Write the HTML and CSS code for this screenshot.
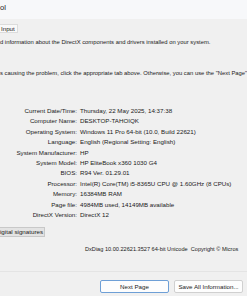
FILE: index.html
```html
<!DOCTYPE html>
<html lang="en">

<head>
  <meta charset="UTF-8">
  <title>DirectX Diagnostic Tool</title>
  <link rel="stylesheet" href="styles.css">
</head>

<body>
  <div class="titlebar">ol</div>

  <div class="window">
    <div class="tabs">
      <span class="tab">Input</span>
    </div>

    <p class="intro">d information about the DirectX components and drivers installed on your system.</p>
    <p class="intro second">s causing the problem, click the appropriate tab above. Otherwise, you can use the "Next Page"</p>

    <div class="sysinfo">
      <div class="row"><span class="label">Current Date/Time:</span><span class="value">Thursday, 22 May 2025, 14:37:38</span></div>
      <div class="row"><span class="label">Computer Name:</span><span class="value">DESKTOP-TAHOIQK</span></div>
      <div class="row"><span class="label">Operating System:</span><span class="value">Windows 11 Pro 64-bit (10.0, Build 22621)</span></div>
      <div class="row"><span class="label">Language:</span><span class="value">English (Regional Setting: English)</span></div>
      <div class="row"><span class="label">System Manufacturer:</span><span class="value">HP</span></div>
      <div class="row"><span class="label">System Model:</span><span class="value">HP EliteBook x360 1030 G4</span></div>
      <div class="row"><span class="label">BIOS:</span><span class="value">R94 Ver. 01.29.01</span></div>
      <div class="row"><span class="label">Processor:</span><span class="value">Intel(R) Core(TM) i5-8365U CPU @ 1.60GHz (8 CPUs)</span></div>
      <div class="row"><span class="label">Memory:</span><span class="value">16384MB RAM</span></div>
      <div class="row"><span class="label">Page file:</span><span class="value">4984MB used, 14149MB available</span></div>
      <div class="row"><span class="label">DirectX Version:</span><span class="value">DirectX 12</span></div>
    </div>

    <div class="check">
      <span class="check-label">igital signatures</span>
    </div>

    <div class="version">DxDiag 10.00.22621.3527 64-bit Unicode&nbsp; Copyright © Micros</div>

    <div class="buttons">
      <button class="btn default">Next Page</button>
      <button class="btn">Save All Information...</button>
    </div>
  </div>
</body>

</html>
```

FILE: styles.css
```css
html,
body {
  margin: 0;
  padding: 0;
}

body {
  width: 247px;
  height: 296px;
  overflow: hidden;
  background-color: #f0f0f0;
  font-family: "Liberation Sans", Arial, sans-serif;
  font-size: 6.2px;
  color: #1a1a1a;
}

.titlebar {
  height: 19px;
  line-height: 16px;
  background-color: #f7f8fa;
  font-size: 7.5px;
  color: #222;
}

.window {
  display: flex;
  flex-direction: column;
  white-space: nowrap;
  overflow: hidden;
}

.tabs {
  display: flex;
  margin-top: 5px;
  height: 9px;
}

.tab {
  padding: 0 2px 0 1px;
  line-height: 8px;
  background-color: #f9f9f9;
  border: 1px solid #dcdcdc;
  border-left: none;
}

.intro {
  margin: 5px 0 0;
  line-height: 8px;
  font-size: 5.85px;
}

.intro.second {
  margin-top: 23px;
}

.sysinfo {
  margin-top: 29px;
  display: flex;
  flex-direction: column;
}

.row {
  display: grid;
  grid-template-columns: 77px 1fr;
  column-gap: 3px;
  height: 10.4px;
  line-height: 10.4px;
}

.label {
  text-align: right;
}

.check {
  margin-top: 7px;
  display: flex;
}

.check-label {
  line-height: 8px;
  padding-right: 1px;
  background-color: #e3e3e3;
  border: 1px solid #c8c8c8;
  border-left: none;
}

.version {
  margin-top: 8px;
  padding-left: 85px;
  line-height: 8px;
  font-size: 5.6px;
}

.buttons {
  margin-top: 18px;
  padding-top: 8px;
  border-top: 1px solid #e4e4e4;
  display: flex;
  justify-content: flex-end;
  gap: 5px;
  padding-right: 4px;
}

.btn {
  font-family: "Liberation Sans", Arial, sans-serif;
  font-size: 6.2px;
  color: #1a1a1a;
  height: 13px;
  width: 69px;
  padding: 0;
  background-color: #fdfdfd;
  border: 1px solid #d0d0d0;
  border-radius: 2px;
}

.btn.default {
  border-color: #6e9fd6;
}
```
